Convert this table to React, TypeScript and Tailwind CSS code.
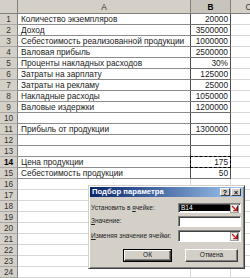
import React from 'react';

const data: [string, string][] = [
  ['Количество экземпляров', '20000'],
  ['Доход', '3500000'],
  ['Себестоимость реализованной продукции', '1000000'],
  ['Валовая прибыль', '2500000'],
  ['Проценты накладных расходов', '30%'],
  ['Затраты на зарплату', '125000'],
  ['Затраты на рекламу', '25000'],
  ['Накладные расходы', '1050000'],
  ['Валовые издержки', '1200000'],
  ['', ''],
  ['Прибыль от продукции', '1300000'],
  ['', ''],
  ['', ''],
  ['Цена продукции', '175'],
  ['Себестоимость продукции', '50'],
];

function RefIcon() {
  return (
    <svg width="9" height="9" viewBox="0 0 9 9" className="shrink-0">
      <rect x="0.5" y="0.5" width="8" height="8" fill="#f2f2f2" stroke="#a0a0a0" />
      <path d="M2 2 L6.2 6.2" stroke="#d01818" strokeWidth="1.3" />
      <path d="M6.6 3.2 V6.6 H3.2" stroke="#d01818" strokeWidth="1.2" fill="none" />
      <path d="M7.5 1.5 V7.5" stroke="#303030" />
    </svg>
  );
}

function TitleButton({ children }: { children: React.ReactNode }) {
  return (
    <div className="flex h-[8px] w-[10px] items-center justify-center border border-t-white border-l-white border-r-[#404040] border-b-[#404040] bg-[#d4d0c8] text-[7px] font-bold leading-none text-black">
      {children}
    </div>
  );
}

function Field({ value, refIcon }: { value?: string; refIcon?: boolean }) {
  return (
    <div className="flex h-full items-center border border-t-[#808080] border-l-[#808080] border-r-white border-b-white bg-white pr-[1px] shadow-[inset_1px_1px_0_#404040]">
      {value ? (
        <div className="ml-[1px] flex h-[6px] flex-1 items-center bg-black pl-[1px] text-[6.5px] leading-none text-white">
          {value}
        </div>
      ) : (
        <div className="flex-1" />
      )}
      {refIcon && <RefIcon />}
    </div>
  );
}

function Button({ label, isDefault, width }: { label: string; isDefault?: boolean; width: string }) {
  return (
    <div className={`${width} h-[13px] ${isDefault ? 'border border-black' : ''}`}>
      <div className="flex h-full items-center justify-center border border-t-white border-l-white border-r-[#404040] border-b-[#404040] text-[6.5px] leading-none text-[#222] shadow-[inset_-1px_-1px_0_#808080]">
        {label}
      </div>
    </div>
  );
}

export default function App() {
  return (
    <div className="relative h-[278px] w-[250px] overflow-hidden bg-white font-['Liberation_Sans',Arial,sans-serif] text-[8.3px] text-[#1a1a1a]">
      {/* column headers */}
      <div className="flex h-[14px] bg-[#d4d0c8] text-[#333]">
        <div className="w-[18px] shrink-0 border-r border-b border-[#808080]" />
        <div className="w-[173px] shrink-0 border-r border-b border-[#808080] pt-[2px] text-center leading-[11px]">A</div>
        <div className="w-[40px] shrink-0 border-r border-b border-[#808080] bg-[#c8c4bc] pt-[2px] text-center font-bold leading-[11px] text-black">B</div>
        <div className="w-[36px] shrink-0 border-r border-b border-[#808080] pt-[2px] text-center leading-[11px]">C</div>
      </div>

      {Array.from({ length: 24 }, (_, i) => {
        const n = i + 1;
        const inTable = n <= 15;
        const [label, value] = data[i] ?? ['', ''];
        return (
          <div key={n} className="flex h-[11px]">
            <div
              className={`w-[18px] shrink-0 border-r border-b border-r-[#808080] border-b-[#a8a8a8] bg-[#d4d0c8] text-center leading-[10px] ${
                n === 14 ? 'font-bold text-black' : 'text-[#333]'
              }`}
            >
              {n}
            </div>
            <div
              className={`w-[173px] shrink-0 overflow-hidden whitespace-nowrap border-r border-b pl-[3px] leading-[10px] ${
                inTable ? 'border-b-[#8c8c8c] border-r-[#505050]' : 'border-b-[#d8d8d8] border-r-[#d8d8d8]'
              }`}
            >
              {label}
            </div>
            <div
              className={`relative w-[40px] shrink-0 border-r border-b pr-[2px] text-right leading-[10px] ${
                inTable ? 'border-b-[#707070] border-r-[#505050]' : 'border-b-[#d8d8d8] border-r-[#d8d8d8]'
              }`}
            >
              {value}
              {n === 14 && <span className="absolute inset-[-1px] border border-dashed border-black" />}
            </div>
            <div className="w-[36px] shrink-0 border-r border-b border-[#d8d8d8]" />
          </div>
        );
      })}

      {/* Goal seek dialog */}
      <div className="absolute left-[88px] top-[185px] flex h-[84px] w-[157px] flex-col border border-t-[#d4d0c8] border-l-[#d4d0c8] border-r-[#404040] border-b-[#404040] bg-[#d4d0c8] px-[1px] pt-[1px] shadow-[inset_1px_1px_0_#ffffff,inset_-1px_-1px_0_#808080]">
        <div className="flex h-[10px] items-center gap-[1px] bg-linear-to-r from-[#0a246a] to-[#a6caf0] pl-[2px] pr-[2px]">
          <span className="flex-1 text-[7.7px] font-bold leading-none text-white">Подбор параметра</span>
          <TitleButton>?</TitleButton>
          <TitleButton>×</TitleButton>
        </div>

        <div className="mt-[6px] grid grid-cols-[87px_63px] grid-rows-[10px_11px_12px] gap-y-[3px] pl-[1px] text-[6.5px] leading-none text-[#222]">
          <div className="flex items-center whitespace-nowrap">
            Установить в&nbsp;<span className="underline">я</span>чейке:
          </div>
          <Field value="B14" refIcon />
          <div className="flex items-center whitespace-nowrap">
            <span className="underline">З</span>начение:
          </div>
          <Field />
          <div className="flex items-center whitespace-nowrap">
            <span className="underline">И</span>зменяя значение ячейки:
          </div>
          <Field refIcon />
        </div>

        <div className="mt-[7px] flex justify-end gap-[13px] pr-[5px]">
          <Button label="ОК" isDefault width="w-[49px]" />
          <Button label="Отмена" width="w-[53px]" />
        </div>
      </div>
    </div>
  );
}
